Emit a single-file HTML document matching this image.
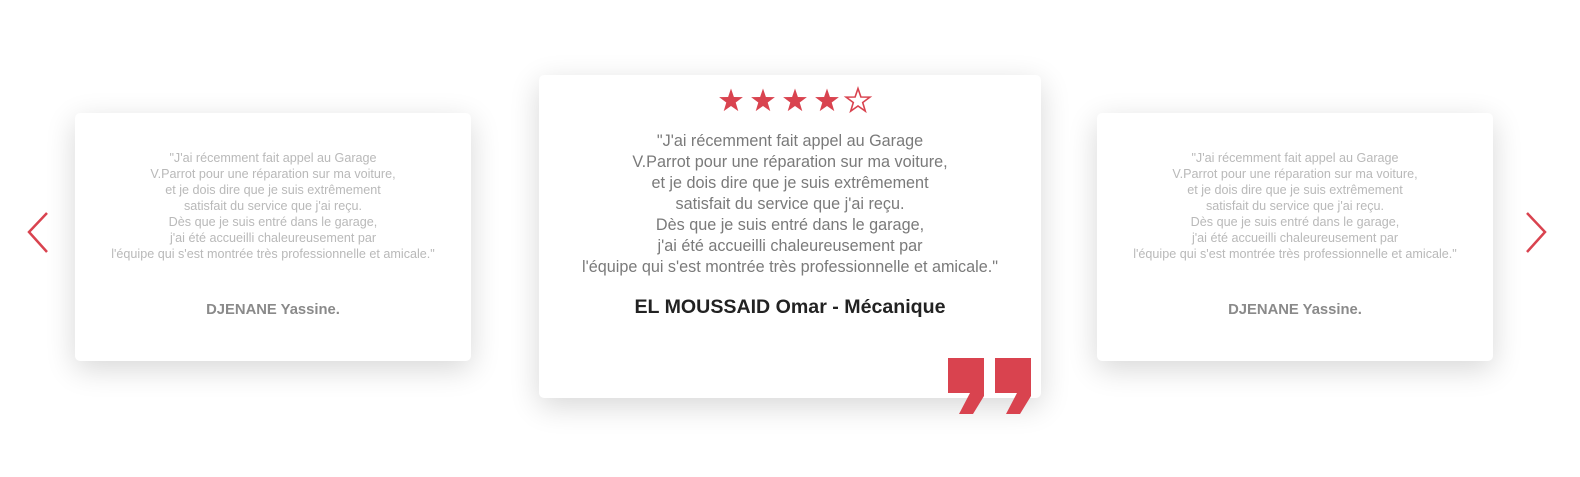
<!DOCTYPE html>
<html><head><meta charset="utf-8"><style>
body{margin:0;width:1580px;height:477px;background:#fff;position:relative;overflow:hidden;font-family:"Segoe UI","Liberation Sans",sans-serif}
.card{position:absolute;background:#fff;border-radius:5px;box-shadow:0 8px 30px rgba(0,0,0,0.16);text-align:center}
.side{top:113px;width:396px;height:248px}
.side p{margin:0;position:absolute;top:37px;left:0;right:0;font-size:12.6px;line-height:16px;color:#b9b9b9}
.side h4{margin:0;position:absolute;top:189px;left:0;right:0;font-size:14.8px;color:#8a8a8a;font-weight:bold}
.center{left:539px;top:75px;width:502px;height:323px}
.center p{margin:0;position:absolute;top:56px;left:0;right:0;font-size:16.2px;line-height:21px;color:#7a7a7a}
.center h3{margin:0;position:absolute;top:221px;left:0;right:0;font-size:19.6px;color:#222;font-weight:bold}
</style></head><body>
<div class="card side" style="left:75px"><p>"J'ai récemment fait appel au Garage<br>V.Parrot pour une réparation sur ma voiture,<br>et je dois dire que je suis extrêmement<br>satisfait du service que j'ai reçu.<br>Dès que je suis entré dans le garage,<br>j'ai été accueilli chaleureusement par<br>l'équipe qui s'est montrée très professionnelle et amicale."</p><h4>DJENANE Yassine.</h4></div>
<div class="card side" style="left:1097px"><p>"J'ai récemment fait appel au Garage<br>V.Parrot pour une réparation sur ma voiture,<br>et je dois dire que je suis extrêmement<br>satisfait du service que j'ai reçu.<br>Dès que je suis entré dans le garage,<br>j'ai été accueilli chaleureusement par<br>l'équipe qui s'est montrée très professionnelle et amicale."</p><h4>DJENANE Yassine.</h4></div>
<div class="card center"><p>"J'ai récemment fait appel au Garage<br>V.Parrot pour une réparation sur ma voiture,<br>et je dois dire que je suis extrêmement<br>satisfait du service que j'ai reçu.<br>Dès que je suis entré dans le garage,<br>j'ai été accueilli chaleureusement par<br>l'équipe qui s'est montrée très professionnelle et amicale."</p><h3>EL MOUSSAID Omar - Mécanique</h3></div>
<svg width="1580" height="477" style="position:absolute;left:0;top:0">
<defs><polygon id="st" points="0,-12.5 2.9,-4 11.9,-3.9 4.7,1.5 7.3,10.1 0,5 -7.3,10.1 -4.7,1.5 -11.9,-3.9 -2.9,-4"/></defs>
<use href="#st" x="731" y="101" fill="#d9434f"/>
<use href="#st" x="763" y="101" fill="#d9434f"/>
<use href="#st" x="795" y="101" fill="#d9434f"/>
<use href="#st" x="827" y="101" fill="#d9434f"/>
<use href="#st" x="858" y="101" fill="none" stroke="#d9434f" stroke-width="1.6"/>
<polygon fill="#d9434f" points="948,358 984,358 984,396 973,414 959,414 970,393 948,393"/>
<polygon fill="#d9434f" points="995,358 1031,358 1031,396 1020,414 1006,414 1017,393 995,393"/>
<polyline fill="none" stroke="#d9434f" stroke-width="2.5" points="47,213 29,232 47,252"/>
<polyline fill="none" stroke="#d9434f" stroke-width="2.5" points="1527,213 1545,232 1527,252"/>
</svg>
</body></html>
